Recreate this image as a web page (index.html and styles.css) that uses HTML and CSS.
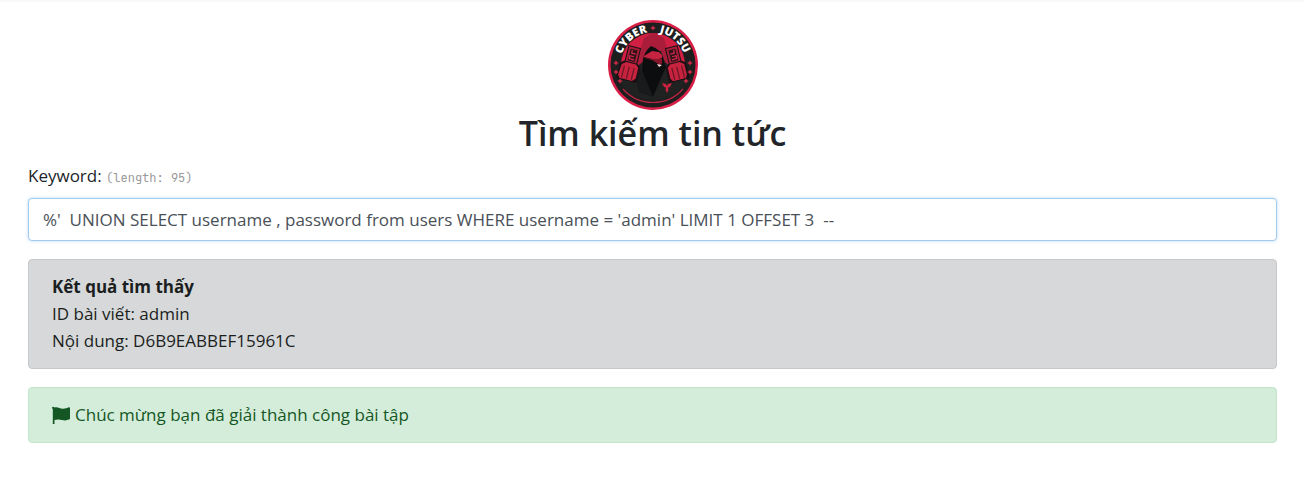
FILE: index.html
```
<!DOCTYPE html>
<html lang="vi">
<head>
<meta charset="utf-8">
<meta name="viewport" content="width=device-width, initial-scale=1">
<title>Tìm kiếm tin tức</title>
<link rel="stylesheet" href="styles.css">
</head>
<body>
<main class="page">
  <header class="masthead">
    <svg class="logo" viewBox="0 0 90 90" role="img" aria-label="Cyber Jutsu">
      <defs>
        <path id="arc-left" d="M12 45A33 33 0 0 1 45 12"/>
        <path id="arc-right" d="M45 12A33 33 0 0 1 78 45"/>
        <path id="star" d="M0-2.800L.9-.9 2.800 0 .9.9 0 2.800-.9.9-2.800 0-.9-.9z"/>
      </defs>
      <circle cx="45" cy="45" r="45" fill="#d81f47"/>
      <circle cx="45" cy="45" r="42.500" fill="#1d1e1e"/>
      <circle cx="45" cy="45" r="32" fill="#d01f43"/>
      <path d="M45 13L36 18 27 46 45 60 64 46 56 18z" fill="#a91d3b"/>
      <path d="M11 52L28 47 35 42 39 31 53 31 57 42 63 47 79 52Q77 71 61 77 45 83 29 77 13 71 11 52z" fill="#202121"/>
      <path d="M35 39Q37 31 43 26 53 29 55 39L58 47 53 58 45 77 37 59 34 50z" fill="#0c0d0e"/>
      <path d="M45 77L34 50 27 54 31 72z" fill="#181a1b"/>
      <path d="M36 36L44 31 51 32 54 35 54 38 48 40 36 37z" fill="#c52340"/>
      <path d="M35 38L44 40 52 45 54 43 54 39 47 39z" fill="#86172a"/>
      <path d="M49 44L54 45 51 47z" fill="#f2dada"/>
      <g transform="translate(22 44) rotate(14)">
        <path d="M-6-18H7V-2L11 1V17H-10V1L-6-2z" fill="#1b1115"/>
        <path d="M-5-17H6V-2H-5z" fill="#a61d38"/>
        <path d="M-3-15H4V-3H-3z" fill="#321219"/>
        <path d="M-1-14V-11H3M2-8H-2V-5H3" fill="none" stroke="#d42b4c" stroke-width="1.200"/>
        <path d="M-8 2L-4-1H6L9 2V13L6 16H-7L-9 13z" fill="#c7233f"/>
        <path d="M-5 3V15M0 3V15M5 3V15" stroke="#6e1827" stroke-width="1.300"/>
      </g>
      <g transform="translate(68 44) rotate(-14)">
        <path d="M-7-18H6V-2L10 1V17H-11V1L-7-2z" fill="#1b1115"/>
        <path d="M-6-17H5V-2H-6z" fill="#a61d38"/>
        <path d="M-4-15H3V-3H-4z" fill="#321219"/>
        <path d="M1-14V-11H-3M-2-8H2V-5H-3" fill="none" stroke="#d42b4c" stroke-width="1.200"/>
        <path d="M-9 2L-6-1H4L8 2V13L6 16H-7L-9 13z" fill="#c7233f"/>
        <path d="M-5 3V15M0 3V15M5 3V15" stroke="#6e1827" stroke-width="1.300"/>
      </g>
      <path d="M54 63L58 64 59 66 60 64 64 63 62 67 60 67.500 60.500 70 59 73 57.500 70 58 67.500 56 67z" fill="#c9233f"/>
      <path d="M15 69Q27 82.500 45 82.500T75 69" fill="none" stroke="#bd2542" stroke-width="1.200"/>
      <g fill="#c92846">
        <use href="#star" x="45" y="8"/>
        <use href="#star" x="8" y="43"/><use href="#star" x="8" y="52"/><use href="#star" x="12" y="61"/>
        <use href="#star" x="82" y="43"/><use href="#star" x="82" y="52"/><use href="#star" x="78" y="61"/>
      </g>
      <g class="logo-text">
        <text><textPath href="#arc-left" startOffset="55%">CYBER</textPath></text>
        <text><textPath href="#arc-right" startOffset="45%">JUTSU</textPath></text>
      </g>
    </svg>
    <h1 class="title">Tìm kiếm tin tức</h1>
  </header>
  <form class="search">
    <label class="search-label" for="keyword">Keyword: <span class="length">(length: 95)</span></label>
    <input class="search-input" id="keyword" type="text" value="%'  UNION SELECT username , password from users WHERE username = 'admin' LIMIT 1 OFFSET 3  --">
  </form>
  <section class="alert alert-result">
    <strong>Kết quả tìm thấy</strong>
    <div>ID bài viết: admin</div>
    <div>Nội dung: D6B9EABBEF15961C</div>
  </section>
  <section class="alert alert-success" role="status">
    <svg class="flag" viewBox="0 0 18 18" aria-hidden="true"><path d="M0 1.500A1.300 1.300 0 0 1 2.400 1.500C6 .3 8 3 11 2.700 13.500 2.700 15 2 17 1.300Q18 1.200 18 2V12.500Q18 13.300 17 13.600C11 16 9 12 2.500 14V18H.8V3Q0 2.500 0 1.500z"/></svg>
    <span>Chúc mừng bạn đã giải thành công bài tập</span>
  </section>
</main>
</body>
</html>
```
FILE: styles.css
```
* { box-sizing: border-box; }

body {
  margin: 0;
  border-top: 2px solid #f8f9fa;
  background: #fff;
  color: #212529;
  font-family: "Segoe UI", "Open Sans", "Noto Sans", sans-serif;
  font-size: 17px;
  line-height: 27px;
}

.page { padding: 18px 27px 40px 28px; }

.masthead {
  display: flex;
  flex-direction: column;
  align-items: center;
}

.logo {
  display: block;
  width: 90px;
  height: 90px;
}

.logo-text {
  fill: #fff;
  font: 800 11px "Open Sans", sans-serif;
  text-anchor: middle;
}

.title {
  margin: 0 0 6px;
  font-size: 34px;
  font-weight: 600;
  line-height: 46px;
}

.search-label {
  display: block;
  margin-bottom: 9px;
  line-height: 27px;
}

.length {
  color: #999;
  font-family: "JetBrains Mono", "Liberation Mono", monospace;
  font-size: 12px;
  line-height: 12px;
}

.search-input {
  display: block;
  width: 100%;
  height: 43px;
  padding: 6px 14px;
  border: 1px solid #a1cbef;
  border-radius: 4px;
  outline: 0;
  box-shadow: 0 0 3px 1px #d9eafa;
  background: #fff;
  color: #495057;
  font: inherit;
}

.alert {
  margin-top: 18px;
  padding: 13px 23px 14px;
  border: 1px solid;
  border-radius: 4px;
}

.alert-result {
  border-color: #c6c8ca;
  background: #d6d8d9;
  color: #1b1e21;
}

.alert-success {
  display: flex;
  align-items: center;
  gap: 5px;
  border-color: #c3e6cb;
  background: #d4edda;
  color: #155724;
}

.flag {
  width: 18px;
  height: 18px;
  fill: currentColor;
}
```
